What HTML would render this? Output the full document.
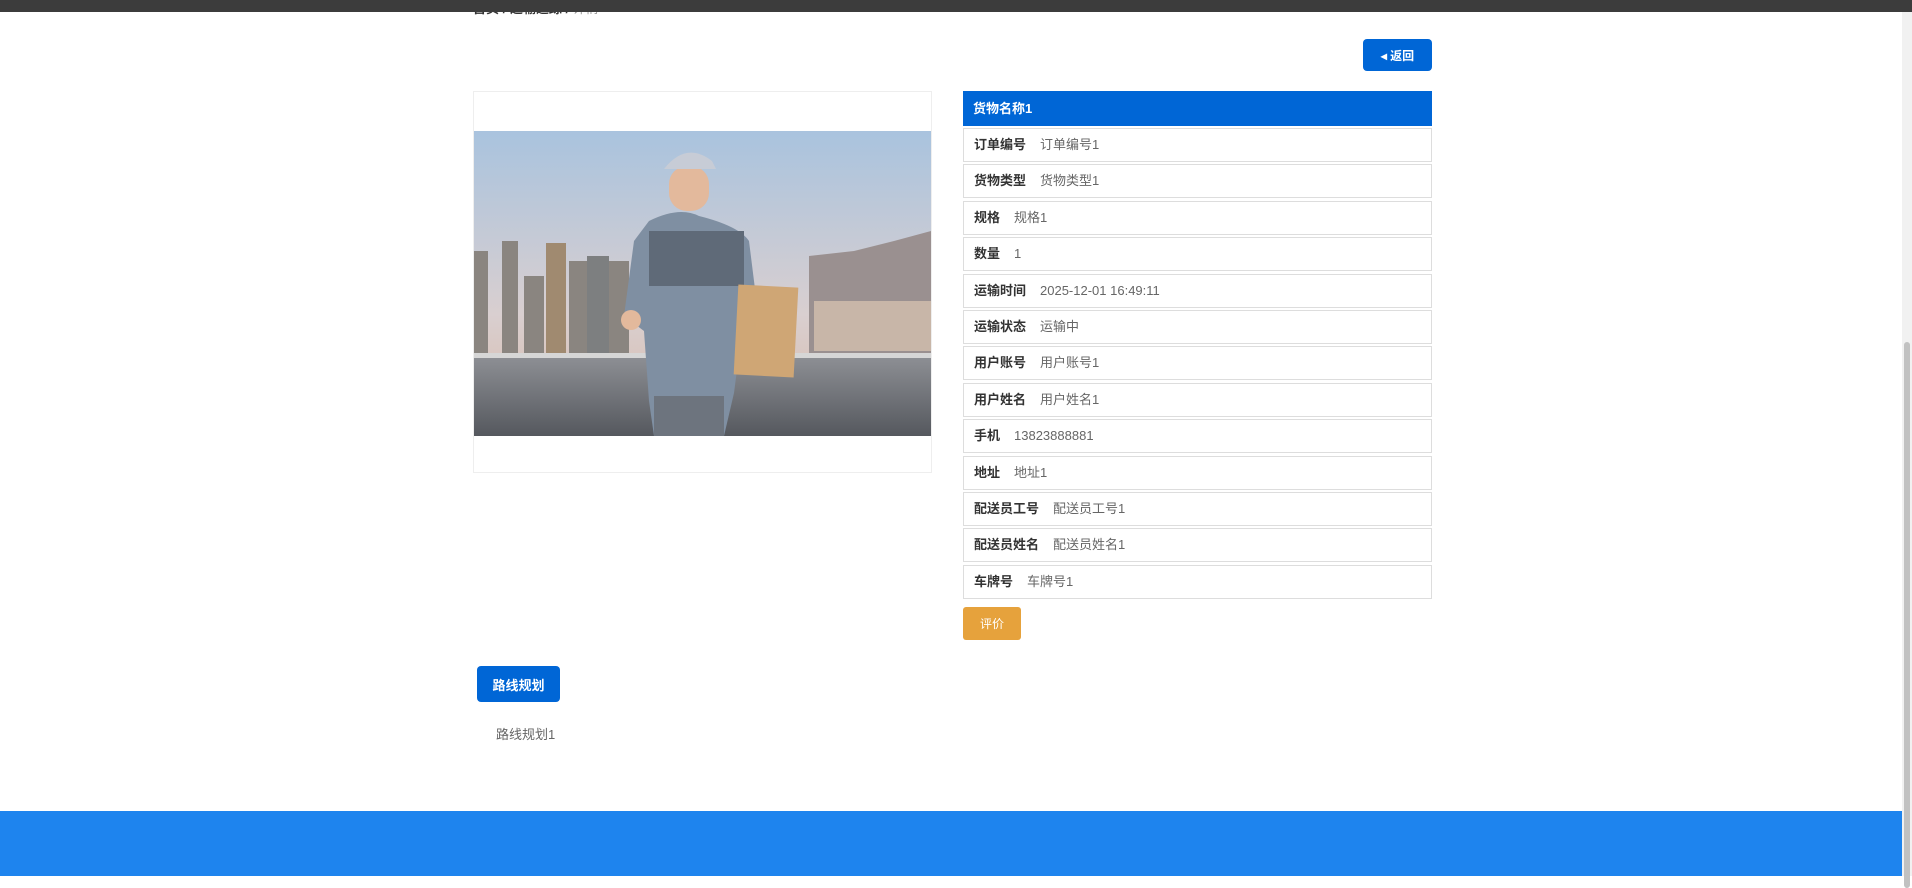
<!DOCTYPE html>
<html><head><meta charset="utf-8"><style>
*{margin:0;padding:0;box-sizing:border-box}
body{width:1912px;height:876px;overflow:hidden;background:#fff;font-family:"Liberation Sans","Noto Sans CJK SC",sans-serif;position:relative}
.topbar{position:absolute;left:0;top:0;width:1912px;height:12px;background:#3c3c3c;z-index:2}
.sb{position:absolute;right:0;top:12px;width:10px;height:864px;background:#f1f1f1}
.sb i{position:absolute;left:2px;top:330px;width:6px;height:546px;background:#c1c1c1;border-radius:3px}
.bc{position:absolute;left:473px;top:-2px;font-size:13px;color:#333;font-weight:bold}
.ret{position:absolute;left:1363px;top:39px;width:69px;height:32px;background:#0066d6;border-radius:4px;color:#fff;font-size:12px;font-weight:bold;display:flex;align-items:center;justify-content:center}
.imgp{position:absolute;left:473px;top:91px;width:459px;height:382px;border:1px solid #eee}
.imgp svg{position:absolute;left:0;top:39px}
.hd{position:absolute;left:963px;top:91px;width:469px;height:35px;background:#0066d6;color:#fff;font-size:13px;font-weight:bold;padding-left:10px;line-height:35px}
.row{position:absolute;left:963px;width:469px;height:34px;border:1px solid #ddd;font-size:13px;line-height:32px;padding-left:10px;color:#333}
.row b{font-weight:bold;margin-right:14px}
.row span{color:#666}
.pj{position:absolute;left:963px;top:607px;width:58px;height:33px;background:#e6a23c;border-radius:3px;color:#fff;font-size:12px;display:flex;align-items:center;justify-content:center}
.lx{position:absolute;left:477px;top:666px;width:83px;height:36px;background:#0066d6;border-radius:4px;color:#fff;font-size:13px;font-weight:bold;display:flex;align-items:center;justify-content:center}
.lxt{position:absolute;left:496px;top:724px;font-size:13px;color:#666}
.ft{position:absolute;left:0;top:811px;width:1902px;height:65px;background:#1e84ee}
</style></head><body>
<div class="topbar"></div>
<div class="bc">首页 / 运输追踪 / <span style="color:#999;font-weight:normal">详情</span></div>
<div class="ret">◂ 返回</div>
<div class="imgp">
<svg width="457" height="305" viewBox="0 0 457 305">
<defs><linearGradient id="sky" x1="0" y1="0" x2="0" y2="1"><stop offset="0" stop-color="#a9c3de"/><stop offset=".6" stop-color="#d9cfd0"/><stop offset="1" stop-color="#d8b9a6"/></linearGradient>
<linearGradient id="road" x1="0" y1="0" x2="0" y2="1"><stop offset="0" stop-color="#8d8f94"/><stop offset="1" stop-color="#55585e"/></linearGradient></defs>
<rect width="457" height="305" fill="url(#sky)"/>
<g fill="#8a8580"><rect x="0" y="120" width="14" height="110"/><rect x="28" y="110" width="16" height="120"/><rect x="50" y="145" width="20" height="85"/><rect x="72" y="112" width="20" height="118" fill="#a08a70"/><rect x="95" y="130" width="18" height="100"/><rect x="113" y="125" width="22" height="105" fill="#7d7f80"/><rect x="135" y="130" width="20" height="100"/></g>
<path d="M335 125 L380 120 L420 110 L457 100 L457 225 L335 225Z" fill="#9a9090"/>
<rect x="340" y="170" width="117" height="50" fill="#c8b6a8"/>
<rect x="0" y="226" width="457" height="79" fill="url(#road)"/>
<rect x="0" y="222" width="457" height="5" fill="#d6d6d6"/>
<path d="M175 90 Q205 75 225 85 Q265 95 275 110 L285 190 L268 200 L260 262 L250 305 L180 305 L175 270 L170 200 L150 185 L160 110Z" fill="#7f8fa2"/>
<rect x="175" y="100" width="95" height="55" fill="#5f6a78"/>
<rect x="195" y="35" width="40" height="45" rx="18" fill="#e3b99c"/>
<path d="M190 38 Q212 10 238 30 L242 38Z" fill="#c7ccd6"/>
<rect x="180" y="265" width="70" height="40" fill="#6d747e"/>
<rect x="262" y="155" width="60" height="90" fill="#cfa675" transform="rotate(3 292 200)"/>
<circle cx="157" cy="189" r="10" fill="#e3b99c"/>
</svg>
</div>
<div class="hd">货物名称1</div>
<div class="row" style="top:128px"><b>订单编号</b><span>订单编号1</span></div>
<div class="row" style="top:164px"><b>货物类型</b><span>货物类型1</span></div>
<div class="row" style="top:201px"><b>规格</b><span>规格1</span></div>
<div class="row" style="top:237px"><b>数量</b><span>1</span></div>
<div class="row" style="top:274px"><b>运输时间</b><span>2025-12-01 16:49:11</span></div>
<div class="row" style="top:310px"><b>运输状态</b><span>运输中</span></div>
<div class="row" style="top:346px"><b>用户账号</b><span>用户账号1</span></div>
<div class="row" style="top:383px"><b>用户姓名</b><span>用户姓名1</span></div>
<div class="row" style="top:419px"><b>手机</b><span>13823888881</span></div>
<div class="row" style="top:456px"><b>地址</b><span>地址1</span></div>
<div class="row" style="top:492px"><b>配送员工号</b><span>配送员工号1</span></div>
<div class="row" style="top:528px"><b>配送员姓名</b><span>配送员姓名1</span></div>
<div class="row" style="top:565px"><b>车牌号</b><span>车牌号1</span></div>
<div class="pj">评价</div>
<div class="lx">路线规划</div>
<div class="lxt">路线规划1</div>
<div class="ft"></div>
<div class="sb"><i></i></div>
</body></html>
